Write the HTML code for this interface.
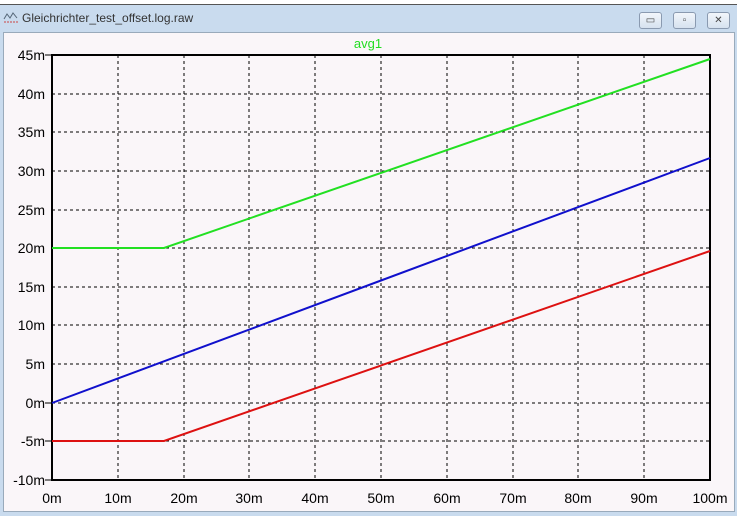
<!DOCTYPE html>
<html><head><style>
body{margin:0;width:737px;height:516px;overflow:hidden;background:#c9dbee;font-family:"Liberation Sans",sans-serif;position:relative}
.top{position:absolute;left:0;top:0;width:737px;height:4px;background:#fff;border-bottom:1px solid #555}
.title{position:absolute;left:22px;top:11px;font-size:12px;color:#333}
.btn{position:absolute;top:12px;width:21px;height:15px;border:1px solid #8a9ab0;border-radius:3px;background:linear-gradient(#f2f6fb,#d6e2ef);font-size:10px;text-align:center;line-height:15px;color:#444}
.canvas{position:absolute;left:3px;top:32px;width:730px;height:478px;background:#faf6f9;border:1px solid #9ab}
</style></head><body>
<div class="top"></div>
<svg style="position:absolute;left:3px;top:9px" width="16" height="16"><path d="M1 10 L4 5 L7 9 L10 4 L14 9" stroke="#567" fill="none"/><path d="M1 13 H15" stroke="#c44" stroke-dasharray="2 1"/></svg>
<div class="title">Gleichrichter_test_offset.log.raw</div>
<div class="btn" style="left:639px">▭</div>
<div class="btn" style="left:673px">▫</div>
<div class="btn" style="left:707px">✕</div>
<div class="canvas"></div>
<svg style="position:absolute;left:0;top:0" width="737" height="516" font-family="Liberation Sans, sans-serif" font-size="14">
<text x="368" y="48" fill="#22dd22" font-size="13" text-anchor="middle">avg1</text>
<g stroke="#000" stroke-dasharray="3 3" stroke-width="1">
<line x1="118" y1="55" x2="118" y2="480"/><line x1="184" y1="55" x2="184" y2="480"/><line x1="249" y1="55" x2="249" y2="480"/><line x1="315" y1="55" x2="315" y2="480"/><line x1="381" y1="55" x2="381" y2="480"/><line x1="447" y1="55" x2="447" y2="480"/><line x1="513" y1="55" x2="513" y2="480"/><line x1="578" y1="55" x2="578" y2="480"/><line x1="644" y1="55" x2="644" y2="480"/>
<line x1="52" y1="94" x2="710" y2="94"/><line x1="52" y1="132" x2="710" y2="132"/><line x1="52" y1="171" x2="710" y2="171"/><line x1="52" y1="210" x2="710" y2="210"/><line x1="52" y1="248" x2="710" y2="248"/><line x1="52" y1="287" x2="710" y2="287"/><line x1="52" y1="325" x2="710" y2="325"/><line x1="52" y1="364" x2="710" y2="364"/><line x1="52" y1="403" x2="710" y2="403"/><line x1="52" y1="441" x2="710" y2="441"/>
</g>
<rect x="52" y="55" width="658" height="425" fill="none" stroke="#000" stroke-width="2"/>
<polyline points="52,248 164,248 710,59" fill="none" stroke="#22e022" stroke-width="2"/>
<polyline points="52,403 710,158" fill="none" stroke="#1010cc" stroke-width="2"/>
<polyline points="52,441 164,441 710,251" fill="none" stroke="#dd1111" stroke-width="2"/>
<g text-anchor="end">
<text x="45" y="60">45m</text><text x="45" y="99">40m</text><text x="45" y="137">35m</text><text x="45" y="176">30m</text><text x="45" y="215">25m</text><text x="45" y="253">20m</text><text x="45" y="292">15m</text><text x="45" y="330">10m</text><text x="45" y="369">5m</text><text x="45" y="408">0m</text><text x="45" y="446">-5m</text><text x="45" y="485">-10m</text>
</g>
<g stroke="#000"><line x1="45" y1="55" x2="52" y2="55"/><line x1="45" y1="403" x2="52" y2="403"/><line x1="45" y1="441" x2="52" y2="441"/><line x1="45" y1="480" x2="52" y2="480"/></g>
<g text-anchor="middle">
<text x="52" y="503">0m</text><text x="118" y="503">10m</text><text x="184" y="503">20m</text><text x="249" y="503">30m</text><text x="315" y="503">40m</text><text x="381" y="503">50m</text><text x="447" y="503">60m</text><text x="513" y="503">70m</text><text x="578" y="503">80m</text><text x="644" y="503">90m</text><text x="710" y="503">100m</text>
</g>
</svg>
</body></html>
